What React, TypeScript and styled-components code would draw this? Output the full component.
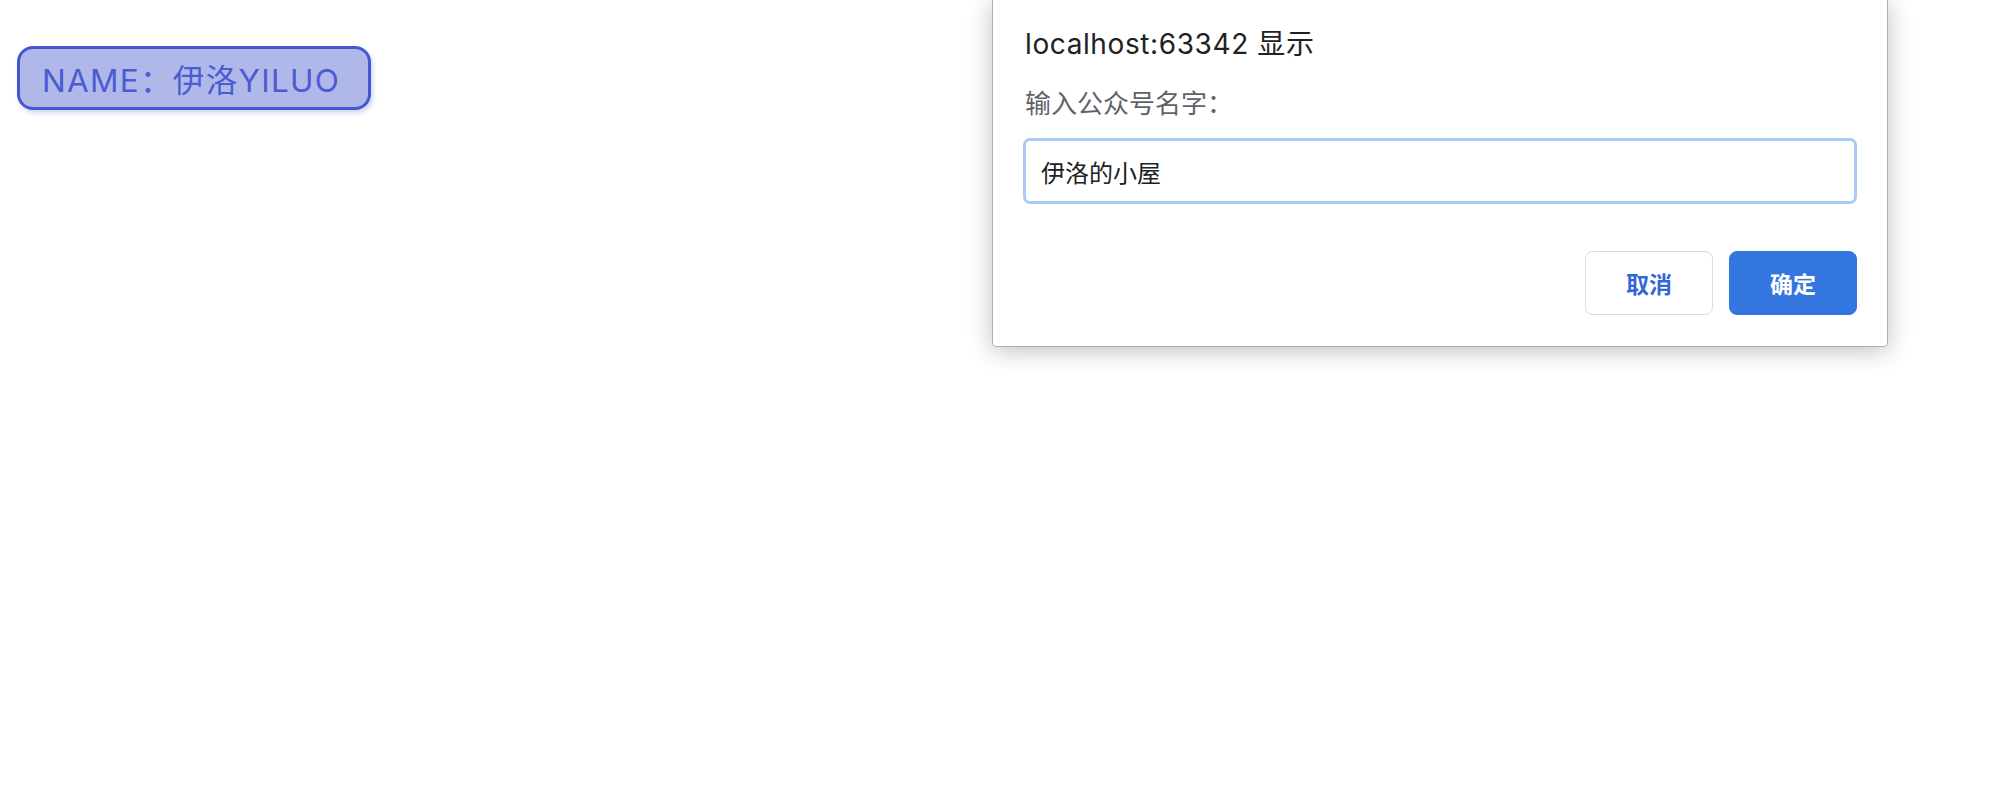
import React from "react";
import styled, { createGlobalStyle } from "styled-components";

const GlobalStyle = createGlobalStyle`
  html, body {
    margin: 0;
    padding: 0;
    background: #ffffff;
    font-family: Inter, "Noto Sans CJK SC", sans-serif;
  }
  * { box-sizing: border-box; }
`;

const Page = styled.div`
  position: relative;
  width: 2002px;
  height: 806px;
  padding: 46px 0 0 17px;
  overflow: hidden;
`;

const NameButton = styled.button`
  display: inline-flex;
  align-items: center;
  height: 64px;
  padding: 0 28px 0 22px;
  border: 3px solid #4457d3;
  border-radius: 16px;
  background: #b0b8ea;
  color: #4b5bd1;
  font-family: Inter, "Noto Sans CJK SC", sans-serif;
  font-size: 31.5px;
  font-weight: 400;
  letter-spacing: 1.3px;
  box-shadow: 2px 3px 4px rgba(68, 87, 211, 0.25);
  cursor: pointer;
`;

const Dialog = styled.div`
  position: absolute;
  left: 992px;
  top: -2px;
  width: 896px;
  display: flex;
  flex-direction: column;
  padding: 27px 30px 31px 30px;
  background: #ffffff;
  border: 1px solid rgba(0, 0, 0, 0.32);
  border-radius: 0 0 5px 5px;
  box-shadow: 0 4px 24px rgba(0, 0, 0, 0.25);
`;

const Title = styled.div`
  padding-left: 2px;
  font-family: Inter, "Noto Sans CJK SC", sans-serif;
  font-size: 28px;
  line-height: 36px;
  letter-spacing: 0.6px;
  color: #202124;
`;

const Label = styled.div`
  margin-top: 23px;
  padding-left: 2px;
  font-family: "Noto Sans CJK SC", sans-serif;
  font-size: 26px;
  line-height: 34px;
  color: #5f6368;
`;

const Input = styled.input`
  margin-top: 19px;
  width: 100%;
  height: 66px;
  padding: 0 15px;
  border: 3px solid #aac9f5;
  border-radius: 7px;
  outline: none;
  background: #ffffff;
  color: #202124;
  font-family: "Noto Sans CJK SC", sans-serif;
  font-size: 24px;
`;

const Actions = styled.div`
  display: flex;
  justify-content: flex-end;
  gap: 16px;
  margin-top: 47px;
`;

const ActionButton = styled.button<{ $primary?: boolean }>`
  width: 128px;
  height: 64px;
  border-radius: 8px;
  border: 1px solid ${(p) => (p.$primary ? "#3376e0" : "#dadce0")};
  background: ${(p) => (p.$primary ? "#3376e0" : "#ffffff")};
  color: ${(p) => (p.$primary ? "#ffffff" : "#3367d6")};
  font-family: "Noto Sans CJK SC", sans-serif;
  font-size: 23px;
  font-weight: 700;
  cursor: pointer;
`;

export default function App() {
  return (
    <>
      <GlobalStyle />
      <Page>
        <NameButton>NAME：伊洛YILUO</NameButton>
        <Dialog>
          <Title>localhost:63342 显示</Title>
          <Label>输入公众号名字：</Label>
          <Input defaultValue="伊洛的小屋" />
          <Actions>
            <ActionButton>取消</ActionButton>
            <ActionButton $primary>确定</ActionButton>
          </Actions>
        </Dialog>
      </Page>
    </>
  );
}
